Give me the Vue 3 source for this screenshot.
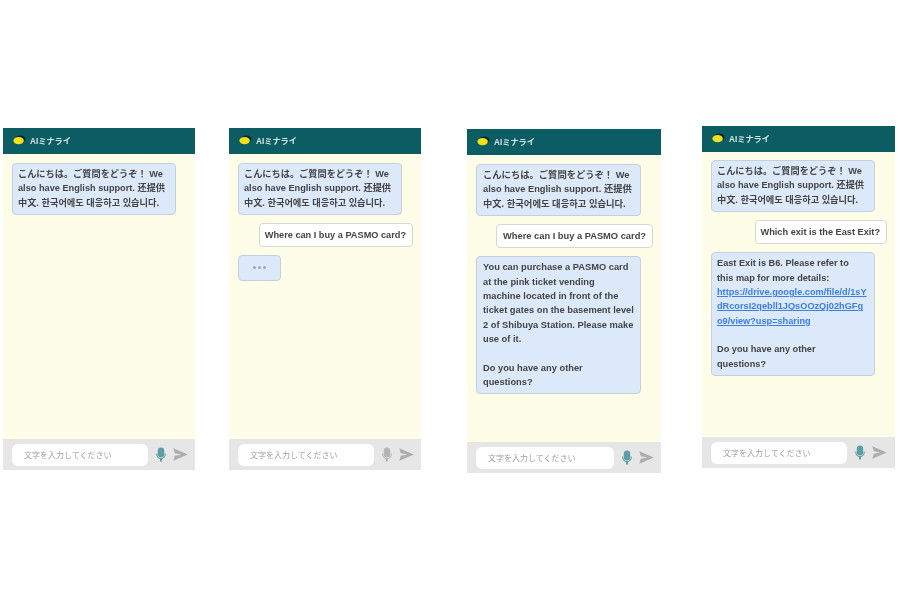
<template>
  <div class="board">
    <div v-for="phone in phones" :key="phone.id" class="phone" :class="phone.id">
      <div class="header">
        <svg class="logo" width="13" height="10" viewBox="0 0 13 10">
          <ellipse cx="7.3" cy="4" rx="5.2" ry="3.6" fill="#12262a" />
          <ellipse cx="5.6" cy="5.6" rx="5.2" ry="3.7" fill="#f2e01a" />
        </svg>
        <span class="title">AIミナライ</span>
      </div>

      <div class="messages">
        <template v-for="(msg, i) in phone.messages" :key="i">
          <div v-if="msg.from === 'typing'" class="bubble bot typing">
            <span class="dot"></span><span class="dot"></span><span class="dot"></span>
          </div>
          <div v-else class="bubble" :class="msg.from">
            <template v-for="(part, j) in msg.parts" :key="j">
              <a v-if="part.link" class="link" href="#">{{ part.text }}</a>
              <template v-else>{{ part.text }}</template>
            </template>
          </div>
        </template>
      </div>

      <div class="footer">
        <div class="input">文字を入力してください</div>
        <svg class="mic" :class="{ off: phone.micOff }" width="10" height="15" viewBox="0 0 10 15">
          <rect x="1.8" y="0.5" width="6.4" height="10" rx="3.2" fill="currentColor" />
          <path d="M0.7 6.5c0 3 1.9 5.2 4.3 5.2s4.3-2.2 4.3-5.2" fill="none" stroke="currentColor" stroke-width="1.1" />
          <path d="M5 11.5v3" stroke="currentColor" stroke-width="2" />
        </svg>
        <svg class="send" width="15" height="13" viewBox="0 0 15 13">
          <path d="M0.3 0.3L14.8 6.5L0.3 12.7L1.8 7.8L8.5 6.5L1.8 5.2Z" fill="currentColor" />
        </svg>
      </div>
    </div>
  </div>
</template>

<script setup>
const greeting = {
  from: 'bot',
  parts: [{ text: 'こんにちは。ご質問をどうぞ！ We\nalso have English support. 还提供\n中文. 한국어에도 대응하고 있습니다.' }]
};

const phones = [
  { id: 'p1', messages: [greeting] },
  {
    id: 'p2',
    micOff: true,
    messages: [
      greeting,
      { from: 'user', parts: [{ text: 'Where can I buy a PASMO card?' }] },
      { from: 'typing' }
    ]
  },
  {
    id: 'p3',
    messages: [
      greeting,
      { from: 'user', parts: [{ text: 'Where can I buy a PASMO card?' }] },
      {
        from: 'bot',
        parts: [{
          text: 'You can purchase a PASMO card\nat the pink ticket vending\nmachine located in front of the\nticket gates on the basement level\n2 of Shibuya Station. Please make\nuse of it.\n\nDo you have any other\nquestions?'
        }]
      }
    ]
  },
  {
    id: 'p4',
    messages: [
      greeting,
      { from: 'user', parts: [{ text: 'Which exit is the East Exit?' }] },
      {
        from: 'bot',
        parts: [
          { text: 'East Exit is B6. Please refer to\nthis map for more details:\n' },
          { link: true, text: 'https://drive.google.com/file/d/1sY\ndRcorsI2qebll1JQsOOzQj02hGFg\no9/view?usp=sharing' },
          { text: '\n\nDo you have any other\nquestions?' }
        ]
      }
    ]
  }
];
</script>

<style scoped>
.board {
  width: 900px;
  height: 600px;
  display: flex;
  align-items: flex-start;
  background: #fff;
  overflow: hidden;
  filter: blur(0.45px);
  font-family: "Liberation Sans", "Noto Sans CJK JP", "Noto Sans CJK KR", sans-serif;
}

.phone {
  width: 192px;
  height: 342px;
  display: flex;
  flex-direction: column;
  background: #fefee8;
  flex-shrink: 0;
}

.p1 { margin: 128px 0 0 3px; }
.p2 { margin: 128px 0 0 34px; }
.p3 { margin: 129px 0 0 46px; width: 194px; height: 344px; }
.p4 { margin: 126px 0 0 41px; width: 193px; }

.header {
  height: 26px;
  display: flex;
  align-items: center;
  gap: 4px;
  padding: 0 0 2px 10px;
  box-sizing: border-box;
  background: #0b5d63;
  flex-shrink: 0;
}

.title {
  font-size: 8.2px;
  font-weight: bold;
  color: #d4e6e6;
}

.messages {
  flex: 1;
  display: flex;
  flex-direction: column;
  align-items: flex-start;
  gap: 8px;
  padding: 9px 8px 0 9px;
}

.p4 .messages {
  padding-top: 8px;
}

.bubble {
  box-sizing: border-box;
  border-radius: 4px;
  padding: 3px 5px 4px;
  font-size: 9.2px;
  line-height: 14.33px;
  font-weight: bold;
  color: #444;
  white-space: pre;
}

.p3 .bubble {
  font-size: 9.3px;
  padding-left: 6px;
}

.bot {
  width: 164px;
  background: #dce9fb;
  border: 1px solid #c6d0da;
}

.p3 .bot {
  width: 165px;
}

.user {
  align-self: flex-end;
  background: #fff;
  border: 1px solid #d8d8d2;
  padding: 4px 6px 4px 5px;
}

.typing {
  width: 43px;
  height: 26px;
  display: flex;
  align-items: center;
  justify-content: center;
  gap: 2px;
}

.dot {
  width: 3px;
  height: 3px;
  border-radius: 50%;
  background: #a0a8b0;
}

.link {
  color: #3d7fe0;
  text-decoration: underline;
}

.footer {
  height: 31px;
  display: flex;
  align-items: center;
  padding-left: 9px;
  background: #e6e6e6;
  flex-shrink: 0;
}

.input {
  width: 136px;
  height: 22px;
  display: flex;
  align-items: center;
  padding-left: 12px;
  box-sizing: border-box;
  background: #fff;
  border-radius: 6px;
  font-size: 8px;
  color: #a0a0a0;
}

.p3 .input {
  width: 138px;
}

.mic {
  margin-left: 8px;
  color: #5b9ea3;
}

.mic.off {
  color: #b4b4b4;
}

.send {
  margin-left: 7px;
  color: #adadad;
}
</style>
